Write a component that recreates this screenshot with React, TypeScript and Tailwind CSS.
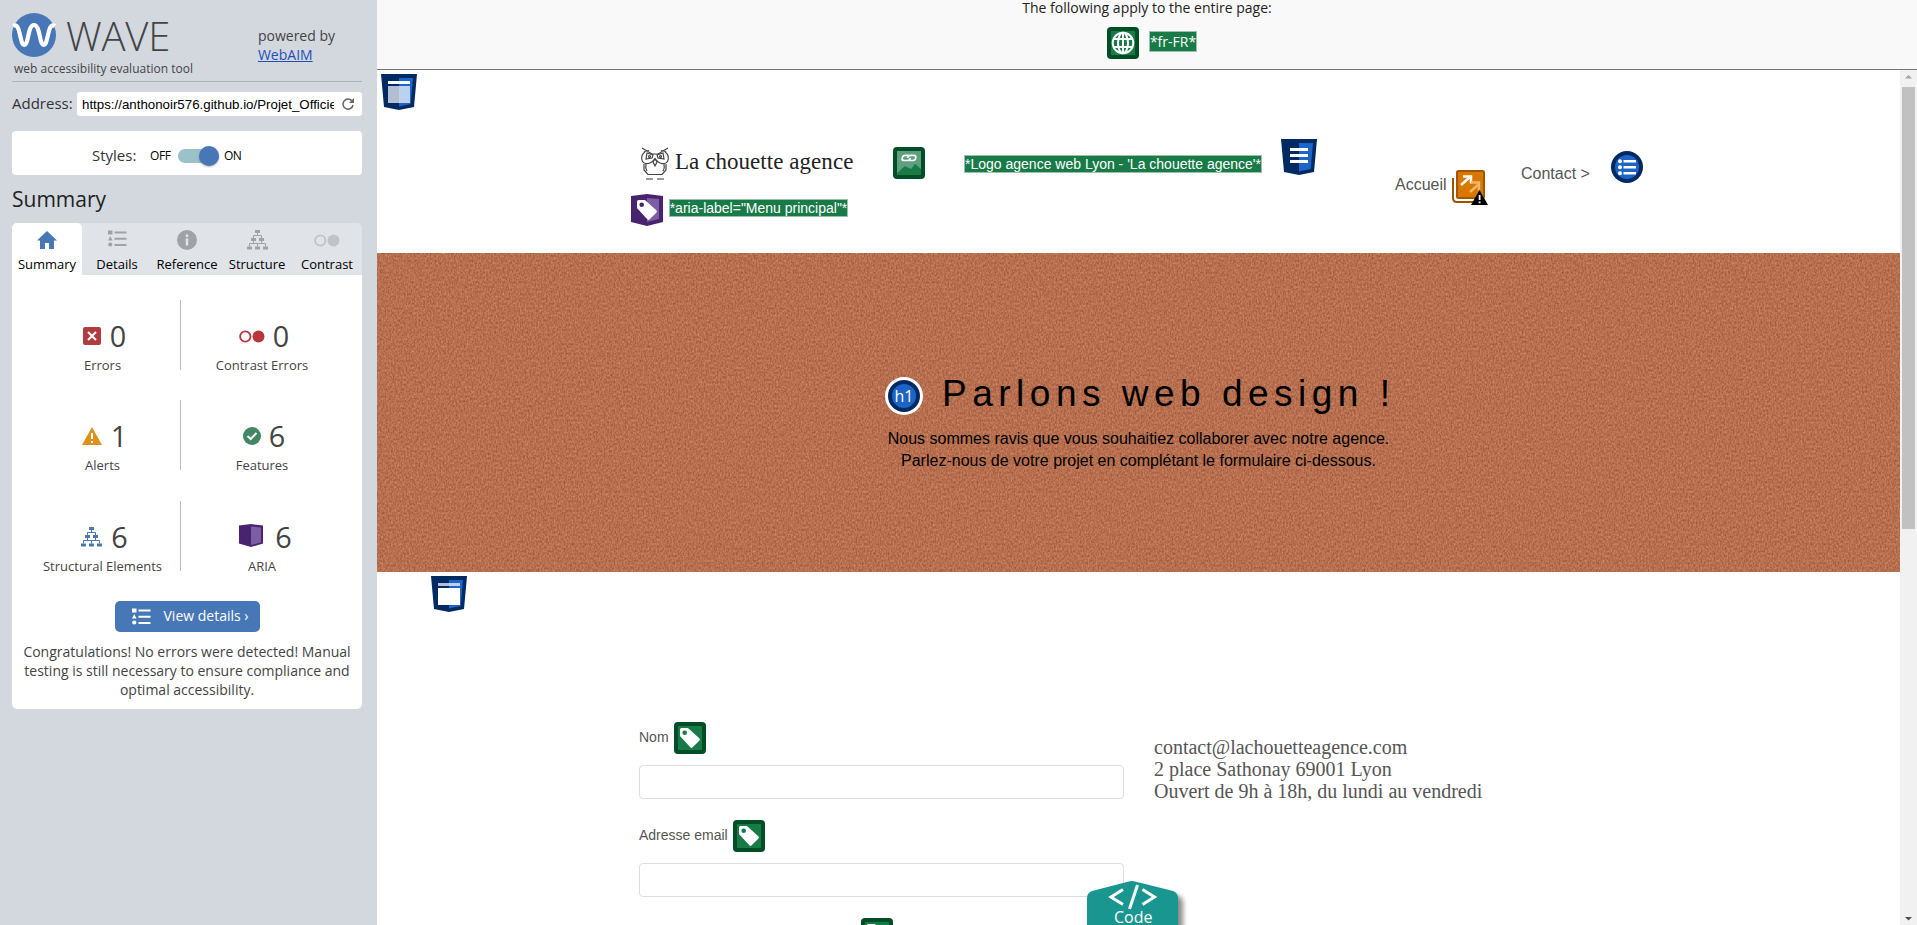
import type { ReactNode } from 'react';

function ListGlyph({ className }: { className: string }) {
  return (
    <svg viewBox="0 0 19 17" className={className} fill="currentColor">
      <path d="M0 0.500h4.500v4H0zM6.500 1.500h12v2h-12zM2.250 6l2.250 4.500H0zM6.500 7.700h12v2h-12zM6.500 14h12v2h-12z" />
      <circle cx="2.250" cy="14.500" r="2.100" />
    </svg>
  );
}

function TreeGlyph({ className }: { className: string }) {
  return (
    <svg viewBox="0 0 21 20" className={className} fill="currentColor">
      <path d="M8 0h5v3H8zM4 8h5v3H4zM12 8h5v3h-5zM0 16.500h5v3H0zM8 16.500h5v3H8zM16 16.500h5v3h-5z" />
      <path d="M10.500 3v2.500M6.500 8V5.500h8V8M6.500 11v3M14.500 11v3M2.500 16.500v-3h16v3M10.500 13.500v3" fill="none" stroke="currentColor" />
    </svg>
  );
}

function ContrastGlyph({ className }: { className: string }) {
  return (
    <svg viewBox="0 0 26 13" className={className} fill="currentColor">
      <circle cx="6.300" cy="6.500" r="5.200" fill="none" stroke="currentColor" strokeWidth="1.800" />
      <circle cx="19.500" cy="6.500" r="6" />
    </svg>
  );
}

const TAG = 'M7.500 6H13.500q.6 0 1 .4L25.300 16.300q1.200 1.200 0 2.400l-6.600 6.600q-1.200 1.200-2.400 0L6.400 14.500q-.4-.4-.4-1V7.500Q6 6 7.500 6zM13 10.700a2.300 2.300 0 1 0-4.600 0a2.300 2.300 0 1 0 4.600 0z';

function GreenIcon({ children, className = '' }: { children: ReactNode; className?: string }) {
  return (
    <svg viewBox="0 0 32 32" className={`size-8 shrink-0 ${className}`}>
      <rect width="32" height="32" rx="4" fill="#004e25" />
      <rect x="4" y="4" width="24" height="24" fill="#177a47" />
      {children}
    </svg>
  );
}

function TagIcon({ className }: { className?: string }) {
  return (
    <GreenIcon className={className}>
      <path d={TAG} fill="#fff" fillRule="evenodd" />
    </GreenIcon>
  );
}

function Shield({ children, className = '' }: { children: ReactNode; className?: string }) {
  return (
    <svg viewBox="0 0 36 36" className={`size-9 shrink-0 ${className}`}>
      <path d="M0 0h36l-3 33-15 3-15-3z" fill="#002a61" />
      <path d="M18 4h14l-2.300 26L18 32.500z" fill="#1c64c5" />
      {children}
    </svg>
  );
}

const tabs = [
  { label: 'Summary', icon: <svg viewBox="0 0 20 18" className="h-[18px] w-5 text-[#4777b6]" fill="currentColor"><path d="M10 0 0 9.500h3V18h5v-6h4v6h5V9.500h3z" /></svg> },
  { label: 'Details', icon: <ListGlyph className="-mt-[3px] h-[17px] w-[19px]" /> },
  { label: 'Reference', icon: <svg viewBox="0 0 20 20" className="size-5"><circle cx="10" cy="10" r="10" fill="#a0a3a6" /><path d="M8.800 4.500h2.400V7H8.800zM8.800 8.500h2.400v7H8.800z" fill="#e3e7ec" /></svg> },
  { label: 'Structure', icon: <TreeGlyph className="h-5 w-[21px]" /> },
  { label: 'Contrast', icon: <ContrastGlyph className="h-[13px] w-[26px] text-[#c1c4c7]" /> },
];

const stats = [
  { n: '0', label: 'Errors', icon: <svg viewBox="0 0 18 18" className="mr-[9px] size-[18px]"><rect width="18" height="18" rx="2" fill="#b13b3e" /><path d="m5 5 8 8M13 5l-8 8" stroke="#fff" strokeWidth="2" /></svg> },
  { n: '0', label: 'Contrast Errors', icon: <ContrastGlyph className="mr-2 h-[13px] w-[26px] text-[#b8373a]" /> },
  { n: '1', label: 'Alerts', icon: <svg viewBox="0 0 20 18" className="mr-[9px] h-[18px] w-5"><path d="m10 0 10 18H0z" fill="#df9120" /><path d="M9 6h2v6H9zM9 14h2v2H9z" fill="#fff" /></svg> },
  { n: '6', label: 'Features', icon: <svg viewBox="0 0 18 18" className="mr-2 size-[18px]"><circle cx="9" cy="9" r="9" fill="#428663" /><path d="m4.500 9 3.200 3L13.500 6" fill="none" stroke="#fff" strokeWidth="2" /></svg> },
  { n: '6', label: 'Structural Elements', icon: <TreeGlyph className="mr-[9px] h-5 w-[21px] text-[#4c78ab]" /> },
  { n: '6', label: 'ARIA', icon: <svg viewBox="0 0 24 23" className="mr-3 -mt-[2px] ml-[3px] h-[23px] w-6"><path d="M0 1.500 12 0l12 1.500v18L12 23 0 19.500z" fill="#48246e" /><path d="M12 2.500 22 3.500v15L12 21z" fill="#7d5da3" /></svg> },
];

function Sidebar() {
  return (
    <aside className="h-full w-[377px] shrink-0 bg-[#d3d8df] pr-[15px] pl-3 font-['Open_Sans',sans-serif] text-[#444]">
      <div className="flex h-[82px] justify-between border-b border-[#b0b4b9] pt-[13px]">
        <div>
          <div className="flex h-[44px] items-center">
            <svg viewBox="0 0 44 44" className="size-11">
              <circle cx="22" cy="22" r="22" fill="#4777b6" />
              <path d="M1 13C6 10 7 18 8.500 24s2 8 3.500 8c5 0 3.500-20 10-20s5 20 10 20c1.500 0 2-2 3.500-8S38 10 43 13" fill="none" stroke="#fff" strokeWidth="4.200" />
            </svg>
            <span className="mt-px ml-[10px] text-[40px] leading-[44px] font-light tracking-[-0.2px] text-[#444]">WAVE</span>
          </div>
          <div className="ml-[2px] text-[12px] leading-6 whitespace-nowrap">web accessibility evaluation tool</div>
        </div>
        <div className="mt-[13px] mr-[27px] text-[14px] leading-[19px]">
          powered by<br />
          <a className="text-[#2350b8] underline">WebAIM</a>
        </div>
      </div>
      <div className="mt-[10px] flex h-6 items-center">
        <span className="w-[65px] shrink-0 pb-px text-[15px] text-[#333]">Address:</span>
        <div className="flex h-6 flex-1 items-center rounded-[3px] bg-white pl-[5px] text-[13.3px] text-black">
          <span className="mt-px w-[252px] overflow-hidden font-['Liberation_Sans',Arial,sans-serif] whitespace-nowrap">https://anthonoir576.github.io/Projet_Officie</span>
          <svg viewBox="0 0 12 12" className="ml-[8px] size-3" fill="none" stroke="#666" strokeWidth="1.500">
            <path d="M10 3A5 5 0 1 0 11 7" />
            <path d="M12 0v5H7z" fill="#666" stroke="none" />
          </svg>
        </div>
      </div>
      <div className="mt-[15px] flex h-11 items-center rounded-[4px] bg-white pt-[6px] pl-20 text-[12px] text-black">
        <span className="w-[58px] pb-px text-[15px] text-[#333]">Styles:</span>
        <span className="w-7 tracking-[-0.4px]">OFF</span>
        <span className="flex h-[14px] w-[41px] items-center justify-end rounded-full bg-[#9bc1c9]">
          <span className="size-5 shrink-0 rounded-full bg-[#4777b6] shadow-[0_1px_2px_rgba(0,0,0,0.3)]" />
        </span>
        <span className="ml-[5px] tracking-[-0.7px]">ON</span>
      </div>
      <h2 className="mt-2 h-10 text-[21px] leading-[32px] text-[#222]">Summary</h2>
      <div className="flex h-[52px] rounded-t-[5px] bg-[#e0e4e9]">
        {tabs.map((t, i) => (
          <div key={t.label} className={`flex w-[70px] flex-col items-center rounded-t-[5px] pt-[5px] text-[#a0a3a6] ${i === 0 ? 'bg-white' : ''}`}>
            <span className="flex h-6 items-center">{t.icon}</span>
            <span className="mt-[3px] text-[13px] leading-[18px] text-black">{t.label}</span>
          </div>
        ))}
      </div>
      <div className="h-[434px] rounded-b-[5px] bg-white">
        <div className="grid grid-cols-[169px_172px] gap-y-[30.4px] pt-[25px]">
          {stats.map((s, i) => (
            <div key={s.label} className={`flex h-[70px] flex-col items-center pt-[22px] ${i % 2 ? 'pr-[10px]' : 'border-r border-[#bbb] pl-[13px]'}`}>
              <div className="ml-1 flex h-[28px] items-center text-[28.8px] leading-[28px]">{s.icon}{s.n}</div>
              <div className="mt-[6px] text-[13px] leading-[18px] whitespace-nowrap">{s.label}</div>
            </div>
          ))}
        </div>
        <div className="mx-auto mt-[30px] flex h-[31px] w-[145px] items-center rounded-[5px] bg-[#4777b6] pl-[17px] text-[14px] text-white">
          <ListGlyph className="mr-[13px] h-[17px] w-[19px]" />
          <span className="pb-px whitespace-nowrap">View details ›</span>
        </div>
        <p className="mt-[10px] text-center text-[14px] leading-[19px]">
          Congratulations! No errors were detected! Manual<br />testing is still necessary to ensure compliance and<br />optimal accessibility.
        </p>
      </div>
    </aside>
  );
}

function AltText({ children, className }: { children: ReactNode; className: string }) {
  return (
    <span className={`flex shrink-0 items-center justify-center border border-[#9ebfae] bg-[#177a47] whitespace-nowrap text-white ${className}`}>{children}</span>
  );
}

function PageHeader() {
  return (
    <header className="flex h-[183px] text-[#555]">
      <Shield className="mt-1 ml-1">
        <path d="M7 7h22v3H7z" fill="#fff" />
        <path d="M7 12h11v17H7z" fill="#b3bfd0" />
        <path d="M18 12h11v17H18z" fill="#bbd1ee" />
      </Shield>
      <div className="ml-[214px] w-[650px] shrink-0 pt-[69px]">
        <div className="flex h-9 items-start">
          <svg viewBox="0 0 28 34" className="mt-2 ml-[10px] h-[34px] w-7 shrink-0" fill="none" stroke="#444" strokeWidth="1.200">
            <path d="M1 1l10 6h6L27 1M3 5q2-1.500 5-1.500M25 5q-2-1.500-5-1.500" />
            <path d="M4 5C-1 8 0 16 5 16.500c4 .5 7-2 9-5 2 3 5 5.500 9 5 5-.5 6-8.500 1-11.500" />
            <path d="m6 6-1 6 6-1 1-3zM22 6l1 6-6-1-1-3zM14 12l-2 3 2 4 2-4z" />
            <path d="M3 17v6l4 4.500h14l4-4.500v-6M5 17q-1 4 1 7M23 17q1 4-1 7" />
            <circle cx="8.500" cy="9.500" r="1" />
            <circle cx="19.500" cy="9.500" r="1" />
            <path d="M5 32h7M16 32h7" stroke="#999" strokeWidth="2" />
          </svg>
          <span className="mt-[7px] ml-[6px] w-[218px] shrink-0 font-['Liberation_Serif',serif] text-[23px] leading-8 tracking-[0.050px] whitespace-nowrap text-[#222]">La chouette agence</span>
          <GreenIcon className="mt-2">
            <path d="M4 4h24v18l-6-5-4 5-6-3-8 7z" fill="#5d9f7e" />
            <g fill="none" stroke="#fff" strokeWidth="1.700" transform="translate(2.300 0) skewX(-12)">
              <path d="M15 8.300h-3.200a2.600 2.600 0 0 0 0 5.200h3q2.600 0 2.600-2.600" />
              <path d="M17 13.500h3.200a2.600 2.600 0 0 0 0-5.200h-3q-2.600 0-2.600 2.600" />
            </g>
          </GreenIcon>
          <AltText className="mt-4 ml-[39px] h-[18px] w-[298px] text-[14px]">*Logo agence web Lyon - 'La chouette agence'*</AltText>
          <Shield className="ml-[19px]">
            <path d="M9 9h18v3H9zM9 15h18v3H9zM9 21h18v3H9z" fill="#fff" />
          </Shield>
        </div>
        <div className="mt-[18px] flex h-8 items-start">
          <svg viewBox="0 0 32 32" className="mt-px size-8 shrink-0">
            <path d="M0 2 16 0l16 2v26l-16 4-16-4z" fill="#48246e" />
            <path d="m16 4 12 1v20l-12 3z" fill="#7d5da3" />
            <path d={TAG} fill="#fff" fillRule="evenodd" />
          </svg>
          <AltText className="mt-[6px] ml-[6px] h-[18px] w-[179px] text-[14px]">*aria-label="Menu principal"*</AltText>
        </div>
      </div>
      <div className="ml-[114px] flex items-start text-[16px] leading-[18px]">
        <span className="mt-[106px] w-[57px]">Accueil</span>
        <svg viewBox="0 0 36 35" className="mt-[100px] h-[35px] w-9">
          <path d="M1 8v20q0 4 4 4h18" fill="none" stroke="#9e5300" strokeWidth="2" />
          <rect x="5" y="1" width="27" height="27" rx="1.500" fill="#d87800" stroke="#a35600" strokeWidth="2" />
          <path d="m9 15 9-8M11 6.500h8v7" fill="none" stroke="#fff" strokeWidth="2.500" />
          <path d="m18 22 9-8M19 12.500h8v8" fill="none" stroke="#f0b46b" strokeWidth="2.500" />
          <path d="m27.500 20 8.500 15H19z" fill="#000" />
          <path d="M26.700 25h1.800v5h-1.800zM26.700 31.500h1.800v1.700h-1.800z" fill="#fff" />
        </svg>
        <span className="mt-[95px] ml-[33px] w-[90px] whitespace-nowrap">Contact &gt;</span>
        <svg viewBox="0 0 32 32" className="mt-[81px] size-8">
          <circle cx="16" cy="16" r="16" fill="#002a61" />
          <circle cx="16" cy="16" r="12" fill="#1c64c5" />
          <path d="M12.500 9H25v2.500H12.500zM12.500 15H25v2.500H12.500zM12.500 21H25v2.500H12.500z" fill="#fff" />
          <g fill="#fff"><circle cx="9" cy="10.200" r="2" /><circle cx="9" cy="16.200" r="2" /><circle cx="9" cy="22.200" r="2" /></g>
        </svg>
      </div>
    </header>
  );
}

function Hero() {
  return (
    <section className="relative h-[319px] bg-[#b97050]">
      <svg className="absolute inset-0 h-full w-full">
        <filter id="grain" x="0" y="0" width="100%" height="100%" colorInterpolationFilters="sRGB">
          <feTurbulence type="fractalNoise" baseFrequency="0.620 0.420" numOctaves="3" seed="7" />
          <feColorMatrix values="0 0 0 0.290 0.570  0 0 0 0.260 0.305  0 0 0 0.230 0.195  0 0 0 0 1" />
        </filter>
        <rect width="100%" height="100%" filter="url(#grain)" />
      </svg>
      <div className="relative pt-[117px] text-black">
        <div className="ml-[508px] flex h-[48px] items-center">
          <span className="mt-[4px] flex size-[38px] items-center justify-center rounded-full bg-white">
            <span className="flex size-8 items-center justify-center rounded-full border-4 border-[#002a61] bg-[#1c64c5] font-['Open_Sans',sans-serif] text-[16px] leading-none text-white">h1</span>
          </span>
          <h1 className="ml-[19px] text-[37px] leading-[48px] tracking-[5.500px] whitespace-nowrap">Parlons web design !</h1>
        </div>
        <p className="mt-[10px] text-center text-[16px] leading-[22px]">
          Nous sommes ravis que vous souhaitiez collaborer avec notre agence.<br />Parlez-nous de votre projet en complétant le formulaire ci-dessous.
        </p>
      </div>
    </section>
  );
}

function Field({ label, gap }: { label: string; gap: string }) {
  return (
    <div className="h-[98px]">
      <div className="flex h-8 items-center text-[14px]">
        <span className={`pb-[2px] ${gap}`}>{label}</span>
        <TagIcon />
      </div>
      <div className="mt-[11px] h-[34px] w-[485px] rounded-[4px] border border-[#ddd] bg-white" />
    </div>
  );
}

function ContactSection() {
  return (
    <section className="text-[#555]">
      <Shield className="mt-1 ml-[54px]">
        <path d="M7 7h11v3H7z" fill="#b3bfd0" />
        <path d="M18 7h11v3H18z" fill="#bbd1ee" />
        <path d="M7 12h22v17H7z" fill="#fff" />
      </Shield>
      <div className="ml-[262px] flex pt-[110px]">
        <div className="w-[515px]">
          <Field label="Nom" gap="w-[35px]" />
          <Field label="Adresse email" gap="w-[94px]" />
          <TagIcon className="ml-[222px]" />
        </div>
        <p className="mt-[14px] font-['Liberation_Serif',serif] text-[20px] leading-[22px] whitespace-nowrap">
          contact@lachouetteagence.com<br />2 place Sathonay 69001 Lyon<br />Ouvert de 9h à 18h, du lundi au vendredi
        </p>
      </div>
    </section>
  );
}

export default function App() {
  return (
    <div className="relative flex h-[925px] w-[1917px] overflow-hidden bg-white">
      <Sidebar />
      <div className="flex min-w-0 flex-1 flex-col">
        <div className="flex h-[70px] shrink-0 flex-col items-center border-b border-[#777] bg-[#f9f9f9] font-['Open_Sans',sans-serif]">
          <div className="h-[27px] text-[14px] leading-4 text-[#222]">The following apply to the entire page:</div>
          <div className="flex items-center pl-[10px]">
            <GreenIcon>
              <g fill="none" stroke="#fff" strokeWidth="2">
                <circle cx="16" cy="16" r="10.300" />
                <ellipse cx="16" cy="16" rx="5" ry="10.300" />
                <path d="M16 6v20M6.500 12h19M6.500 20h19" />
              </g>
            </GreenIcon>
            <AltText className="-mt-[3px] ml-[10px] h-[21px] w-12 text-[14px]">*fr-FR*</AltText>
          </div>
        </div>
        <div className="flex min-h-0 flex-1">
          <main className="w-[1523px] overflow-hidden font-['Liberation_Sans',Arial,sans-serif]">
            <PageHeader />
            <Hero />
            <ContactSection />
          </main>
          <div className="flex w-[17px] flex-col items-center bg-[#f1f1f1]">
            <svg viewBox="0 0 17 17" className="size-[17px]" fill="#a3a3a3"><path d="m8.500 5 3.500 3.500H5z" /></svg>
            <div className="h-[442px] w-[13px] bg-[#c1c1c1]" />
            <svg viewBox="0 0 17 17" className="mt-auto size-[17px]" fill="#505050"><path d="M5 9h7l-3.500 3.500z" /></svg>
          </div>
        </div>
      </div>
      <div className="absolute top-[881px] left-[1087px] h-[44px] w-[110px]">
        <svg viewBox="0 0 110 44" className="absolute inset-0 overflow-hidden">
          <filter id="soft" x="-20%" y="-20%" width="140%" height="140%"><feGaussianBlur stdDeviation="2.500" /></filter>
          <path d="M7 60V22q0-6 6-8L52 5l40 10q4 2 4 7v38z" fill="#000" opacity="0.450" filter="url(#soft)" />
          <path d="M0 60V17q0-5 5-7L42 .5q3-1 6 0L86 10q5 2 5 7v43z" fill="#18968f" />
          <path d="M36 8.500 24 16l12 7.500M55.500 8.500l12 7.500-12 7.500" fill="none" stroke="#fff" strokeWidth="3" />
          <path d="M50.500 4 42.500 28" stroke="#fff" strokeWidth="3" />
        </svg>
        <span className="absolute top-[28px] left-[27px] font-['Open_Sans',sans-serif] text-[16px] leading-4 text-white">Code</span>
      </div>
    </div>
  );
}
